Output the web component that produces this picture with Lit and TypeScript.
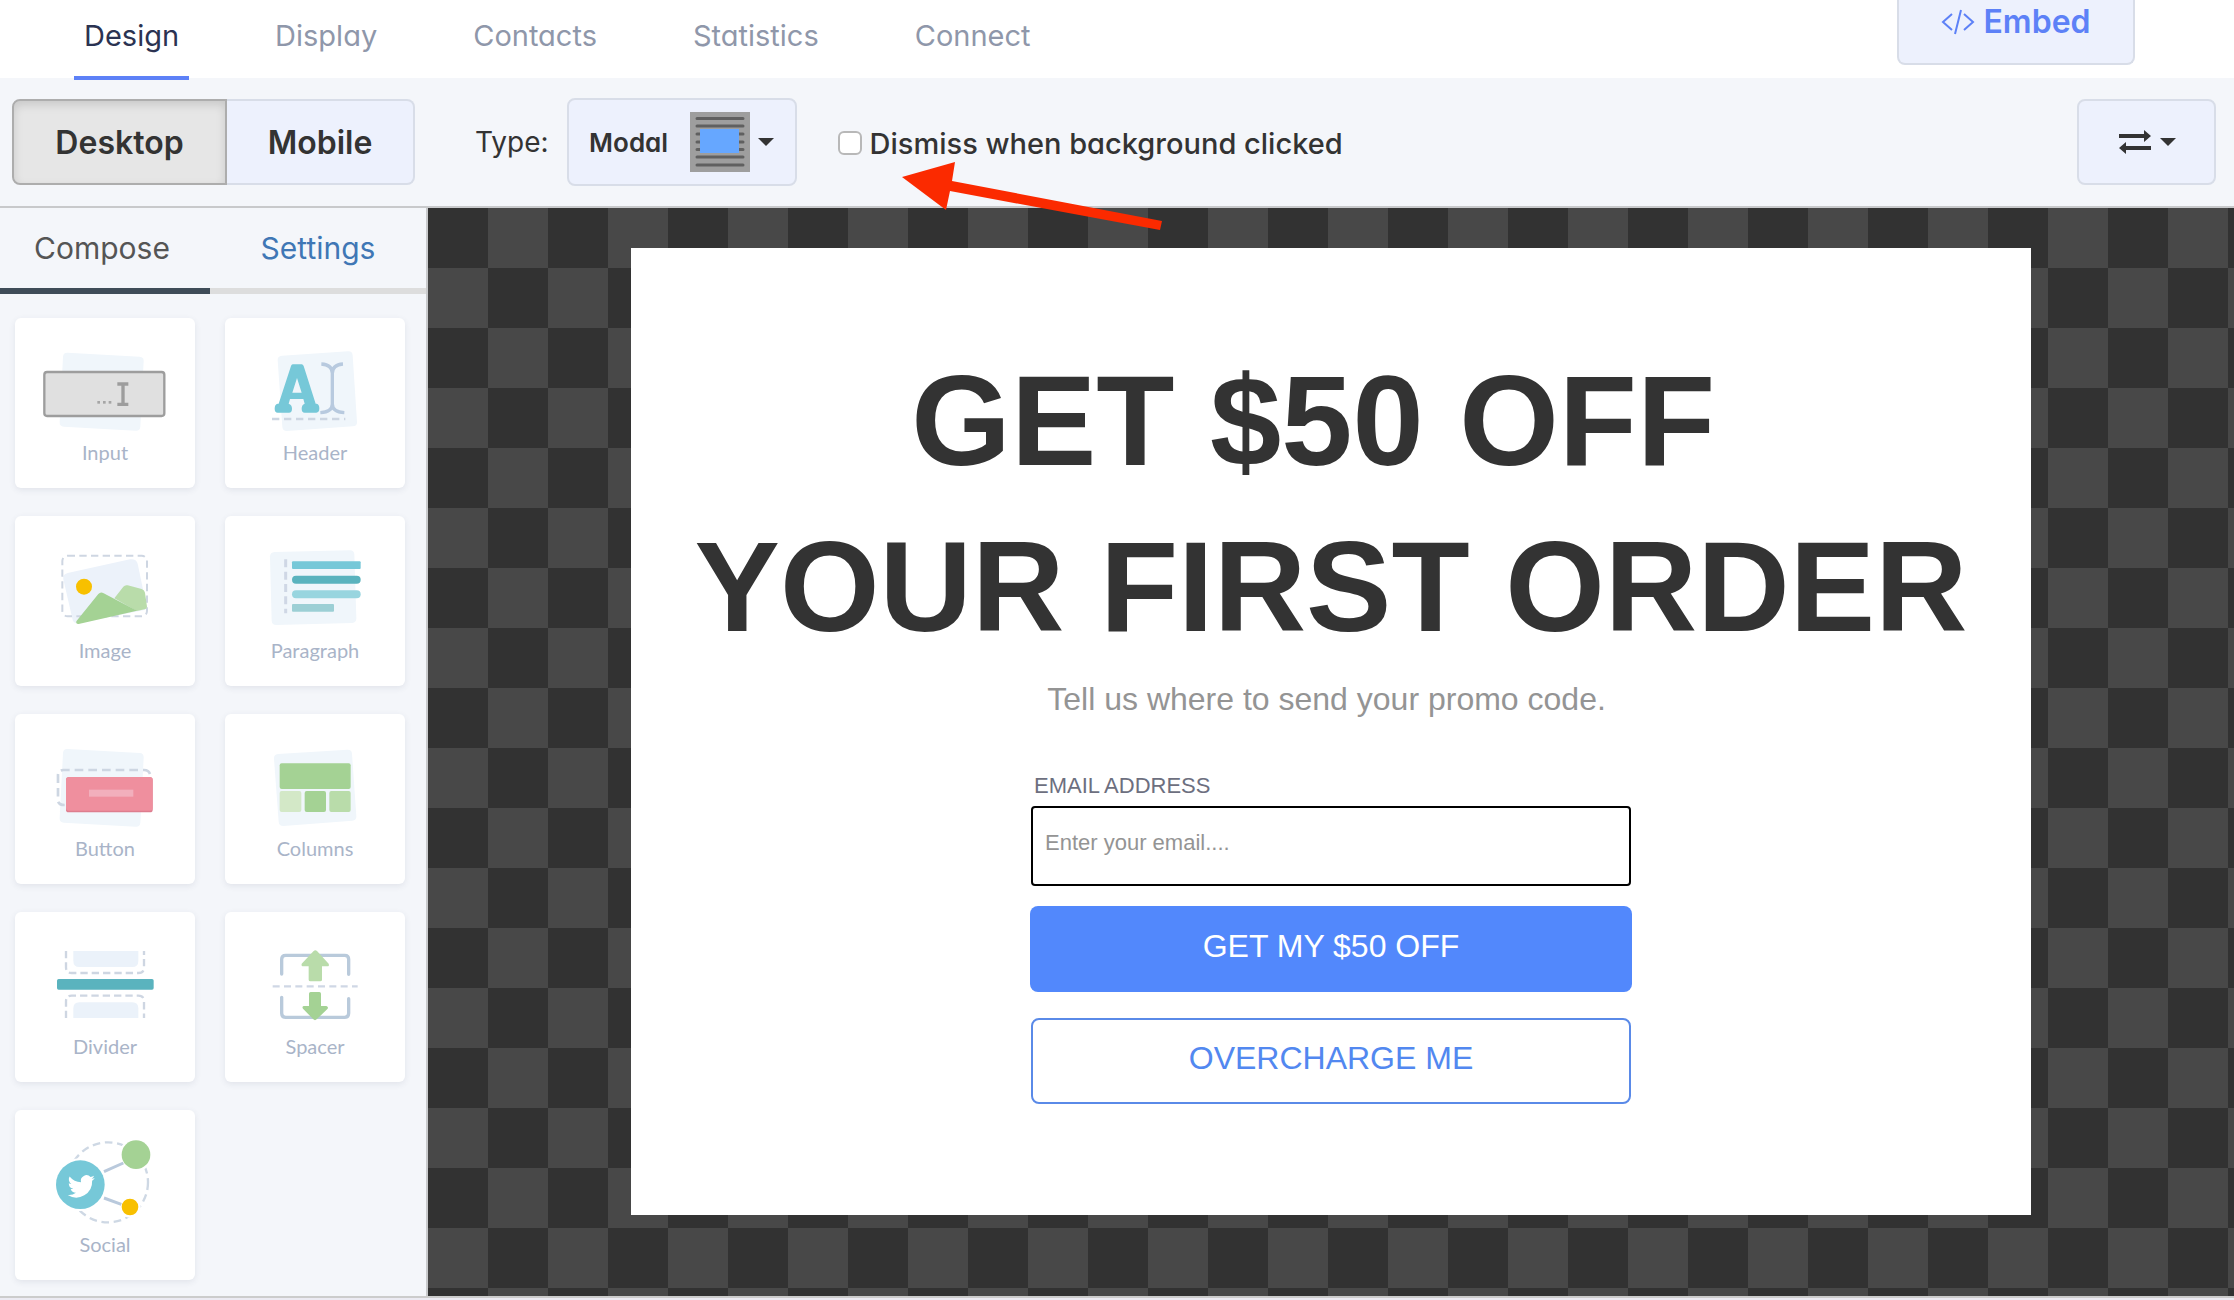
import { LitElement, html, svg, css } from "lit";
import { customElement } from "lit/decorators.js";

const tile = (name: string, view: string, art: unknown) => ({ name, view, art });

const tiles = [
  tile("Input", "45 54 540 360", svg`
    <path d="M203 158 L419 170 Q432 171 431 184 L421 380 Q420 393 407 392 L191 380 Q178 379 179 366 L189 170 Q190 157 203 158Z" fill="#f0f6fb"/>
    <rect x="133" y="216" width="360" height="132" rx="8" fill="#e0e0e0" stroke="#9d9d9d" stroke-width="7"/>
    <g fill="#a6a6a6"><rect x="292" y="303" width="8" height="8"/><rect x="309" y="303" width="8" height="8"/><rect x="326" y="303" width="8" height="8"/></g>
    <path d="M352 252H385M369 252V313M352 313H385" stroke="#9d9d9d" stroke-width="10" fill="none"/>`),
  tile("Header", "675 54 540 360", svg`
    <path d="M846 167 L1044 154 Q1057 153 1058 166 L1071 366 Q1072 378 1059 379 L861 393 Q848 393 847 380 L833 181 Q832 168 846 167Z" fill="#f0f6fb"/>
    <path fill-rule="evenodd" d="M878 193H905Q909 193 911 198L947 311H950Q958 313 958 325Q958 338 949 338H914Q905 338 905 326Q905 314 914 311L910 297H870L866 311Q876 314 876 326Q876 338 867 338H833Q824 338 824 326Q824 313 833 311H836L873 198Q875 193 878 193ZM891 234L877 278H905Z" fill="#76c8d8"/>
    <path d="M964 192Q997 194 997 220V312Q997 336 961 338M1029 192Q997 194 997 220V312Q997 336 1033 338" stroke="#b8cadf" stroke-width="10" fill="none"/>
    <path d="M816 357H1036" stroke="#cdd6e2" stroke-width="7" stroke-dasharray="22 14" fill="none"/>`),
  tile("Image", "45 648 540 360", svg`
    <path d="M203 819L390 778Q408 775 413 791L440 920Q440 928 433 930L232 970Q222 970 218 960L190 838Q187 823 203 819Z" fill="#ecf2fa"/>
    <rect x="187" y="767" width="254" height="182" rx="16" fill="none" stroke="#ced6e2" stroke-width="6" stroke-dasharray="22 13"/>
    <circle cx="252" cy="860" r="24" fill="#f8c000"/>
    <path d="M343 895L370 860Q375 854 383 856L425 867Q434 870 435 878L441 920Q441 926 434 928L410 933Z" fill="#b9dcaa"/>
    <path d="M229 964L295 882Q302 874 311 880L411 932L236 972Q227 973 229 964Z" fill="#a4d294"/>`),
  tile("Paragraph", "675 648 540 360", svg`
    <path d="M824 756L1050 751Q1062 751 1063 763L1069 955Q1069 968 1057 969L829 975Q816 975 815 962L810 770Q810 757 824 756Z" fill="#f0f6fb"/>
    <path d="M857 778V940" stroke="#cfd7e5" stroke-width="9" stroke-dasharray="24 13" fill="none"/>
    <rect x="876" y="784" width="206" height="23" rx="3" fill="#76c8d8"/>
    <rect x="876" y="827" width="206" height="24" rx="12" fill="#5ab3be"/>
    <rect x="876" y="871" width="206" height="24" rx="12" fill="#98d5df"/>
    <rect x="876" y="912" width="126" height="23" rx="3" fill="#9ccfd5"/>`),
  tile("Button", "45 72 540 360", svg`
    <path d="M203 177L419 189Q432 190 431 203L421 398Q420 411 407 410L191 398Q178 397 179 384L189 189Q190 176 203 177Z" fill="#f0f6fb"/>
    <path d="M450 252Q446 240 432 240H190Q174 240 174 256V330Q174 345 194 345" fill="none" stroke="#cdd6e2" stroke-width="8" stroke-dasharray="26 15"/>
    <rect x="198" y="262" width="260" height="105" rx="8" fill="#dd7d8e"/>
    <rect x="198" y="261" width="260" height="101" rx="8" fill="#ef8f9e"/>
    <rect x="267" y="299" width="133" height="21" fill="#f2afbc"/>`),
  tile("Columns", "675 72 540 360", svg`
    <path d="M834 192L1042 179Q1055 178 1056 191L1069 378Q1070 391 1057 392L850 408Q837 408 836 395L822 207Q821 193 834 192Z" fill="#f0f6fb"/>
    <rect x="839" y="220" width="213" height="77" rx="6" fill="#a4d294"/>
    <rect x="839" y="303" width="65" height="63" rx="6" fill="#d3e8c7"/>
    <rect x="914" y="303" width="64" height="63" rx="6" fill="#a4d294"/>
    <rect x="988" y="303" width="64" height="63" rx="6" fill="#b9dcaa"/>`),
  tile("Divider", "45 666 540 360", svg`
    <path d="M220 783H415V812Q415 831 397 831H238Q220 831 220 812Z" fill="#ebf2fa"/>
    <path d="M220 984V955Q220 937 238 937H397Q415 937 415 955V984Z" fill="#ebf2fa"/>
    <g fill="none" stroke="#ced6e2" stroke-width="7" stroke-dasharray="22 12">
      <path d="M198 783V832Q198 849 215 849H415Q432 849 432 832V783"/>
      <path d="M198 984V934Q198 917 215 917H415Q432 917 432 934V984"/></g>
    <rect x="171" y="867" width="290" height="32" rx="5" fill="#5ab3be"/>`),
  tile("Spacer", "675 666 540 360", svg`
    <g fill="none" stroke="#b9cadb" stroke-width="10" stroke-linecap="round">
      <path d="M845 852V808Q845 796 857 796H1034Q1046 796 1046 808V853"/>
      <path d="M845 922V970Q845 982 857 982H1034Q1046 982 1046 970V926"/></g>
    <path d="M818 889H1073" stroke="#cfd7e5" stroke-width="7" stroke-dasharray="21 13" fill="none"/>
    <path d="M941 783Q946 778 951 783L986 821Q989 829 982 829H966V869Q966 874 961 874H931Q926 874 926 869V829H910Q903 829 905 821Z" fill="#b9dcaa"/>
    <path d="M932 906H958Q963 906 963 911V948H979Q986 950 983 956L950 988Q945 993 940 988L909 956Q905 950 911 948H927V911Q927 906 932 906Z" fill="#a4d294"/>`),
  tile("Social", "0 0 540 360", svg`
    <circle cx="279" cy="217" r="120" fill="none" stroke="#ced8e4" stroke-width="7" stroke-dasharray="23 14"/>
    <circle cx="196" cy="224" r="79" fill="#fff"/><circle cx="363" cy="134" r="50" fill="#fff"/><circle cx="345" cy="291" r="32" fill="#fff"/>
    <path d="M267 185L325 159M267 264L319 283" stroke="#b9c9dc" stroke-width="9"/>
    <circle cx="196" cy="224" r="73" fill="#76c8d8"/>
    <circle cx="363" cy="134" r="43" fill="#a4d294"/><circle cx="345" cy="291" r="25" fill="#f8c000"/>
    <path transform="translate(159 187) scale(3.4)" d="M23.6 4.9c-.9.4-1.8.7-2.8.8a4.900 4.900 0 0 0 2.200-2.700c-1 .6-2 1-3.100 1.200a4.900 4.900 0 0 0-8.400 4.500A13.900 13.900 0 0 1 1.400 3.600a4.900 4.900 0 0 0 1.500 6.600c-.8 0-1.600-.2-2.200-.6a4.900 4.900 0 0 0 3.900 4.900c-.7.200-1.500.2-2.200.1a4.900 4.900 0 0 0 4.600 3.400A9.900 9.900 0 0 1-.2 20 14 14 0 0 0 21.300 7.500c1-.7 1.700-1.600 2.300-2.600z" fill="#fff"/>`),
];

@customElement("app-root")
export class AppRoot extends LitElement {
  static styles = css`
    :host { display: block; min-height: 100vh; background: #ecebf3; color: #333; font-family: Inter, "Liberation Sans", sans-serif; font-feature-settings: "cv11"; }
    * { box-sizing: border-box; }
    .page { display: flex; flex-direction: column; min-height: calc(100vh - 2px); border-bottom: 2px solid #ccc; }
    button, input { font: inherit; font-feature-settings: inherit; color: inherit; margin: 0; }
    .btn { display: flex; align-items: center; justify-content: center; background: #edf1fd; border: 2px solid #d8dde8; border-radius: 8px; padding: 0; }
    .top { position: relative; z-index: 1; display: flex; justify-content: space-between; align-items: flex-start; height: 78px; padding: 0 99px 0 74px; background: #fff; }
    .nav { display: flex; gap: 76px; }
    .nav a { height: 80px; padding: 16px 10px 0; font-size: 29px; line-height: 40px; color: #8f97aa; text-decoration: none; }
    .nav a.on { color: #2b3352; border-bottom: 4px solid #5d81f7; }
    .embed { width: 238px; height: 65px; padding-bottom: 20px; border-top: 0; border-radius: 0 0 8px 8px; gap: 8px; color: #5d81f7; font-size: 32px; font-weight: 600; }
    .bar { display: flex; align-items: center; height: 130px; padding: 0 18px 0 12px; background: #f4f6fa; border-bottom: 2px solid #c8c9cb; }
    .seg { display: flex; }
    .seg .btn { height: 86px; font-size: 32px; font-weight: 600; width: 188px; border-left: 0; border-radius: 0 8px 8px 0; }
    .seg .btn.on { width: 215px; background: #e6e6e6; border: 2px solid #adadad; border-radius: 8px 0 0 8px; box-shadow: inset 0 4px 10px rgba(0,0,0,.13); }
    .type { margin: 0 18px 0 60px; font-size: 28px; }
    .modal-pick { width: 230px; height: 88px; gap: 8px; font-size: 26px; font-weight: 600; }
    .modal-pick .thumb { margin-left: 14px; }
    .check { display: flex; align-items: center; gap: 8px; margin-left: 41px; padding-top: 2px; font-size: 29px; font-weight: 500; }
    .check input { appearance: none; width: 24px; height: 24px; border: 2px solid #b8b8b8; border-radius: 6px; background: #fff; }
    .swap { width: 139px; height: 86px; margin-left: auto; gap: 8px; }
    .main { flex: 1; display: grid; grid-template-columns: 428px 1fr; }
    .side { background: #f4f6fa; border-right: 2px solid #c8c9cb; }
    .tabs { display: flex; height: 86px; }
    .tabs button { flex: 1; border: 0; border-bottom: 6px solid #ddd; background: none; font-size: 30px; color: #3f77b5; padding: 0; }
    .tabs button.on { flex: 0 0 210px; padding-right: 6px; border-color: #3f4c58; color: #555; }
    .tiles { display: grid; grid-template-columns: 180px 180px; gap: 28px 30px; padding: 24px 15px 16px; }
    .tile { display: flex; flex-direction: column; align-items: center; height: 170px; padding: 0; border: 0; border-radius: 6px; background: #fff; box-shadow: 0 2px 6px rgba(60,70,100,.1); font-family: Lato, sans-serif; font-size: 20px; line-height: 28px; color: #a9b4c8; }
    .tile svg { width: 180px; height: 120px; flex: none; }
    .canvas { position: relative; display: flex; justify-content: center; align-items: flex-start; padding: 40px 60px; background: conic-gradient(#484848 25%, #323232 0 50%, #484848 0 75%, #323232 0) 0 0 / 120px 120px; }
    .popup { width: 1400px; min-height: 967px; padding: 90px 0 60px; background: #fff; font-family: "Liberation Sans", Arial, sans-serif; font-feature-settings: normal; display: flex; flex-direction: column; align-items: center; }
    h1 { margin: 0; font-size: 128px; line-height: 166px; text-align: center; white-space: nowrap; }
    .lead { margin: 7px 0 0; font-size: 32px; line-height: 44px; color: #949494; }
    .form { width: 602px; display: flex; flex-direction: column; margin-top: 49px; }
    .form label { padding-left: 4px; font-size: 22px; line-height: 32px; color: #6d6f80; }
    .form input { height: 80px; margin: 4px 1px 20px; padding: 0 12px 6px; border: 2px solid #000; border-radius: 4px; font-size: 22px; background: #fff; }
    .form input::placeholder { color: #949494; opacity: 1; }
    .cta { height: 86px; padding: 0 0 6px; border: 0; border-radius: 8px; background: #5288fc; color: #fff; font-size: 32px; }
    .no { height: 86px; margin: 26px 1px 0; padding: 0 0 6px; border: 2px solid #5a8ae8; border-radius: 8px; background: #fff; color: #5288f0; font-size: 32px; }
    .pointer { position: absolute; left: 474px; top: -46px; width: 260px; height: 70px; }
  `;

  render() {
    const caret = html`<svg width="16" height="8" viewBox="0 0 16 8"><path d="M0 0H16L8 8Z" fill="#333"/></svg>`;
    return html`
      <div class="page">
        <header class="top">
          <nav class="nav">
            <a class="on" href="#design">Design</a><a href="#display">Display</a><a href="#contacts">Contacts</a><a href="#statistics">Statistics</a><a href="#connect">Connect</a>
          </nav>
          <button class="btn embed"><svg width="34" height="26" viewBox="0 0 34 26" fill="none" stroke="#5d81f7" stroke-width="2"><path d="M11 5L2 13L11 21M23 5L32 13L23 21M20 1L14 25"/></svg>Embed</button>
        </header>
        <section class="bar">
          <div class="seg"><button class="btn on">Desktop</button><button class="btn">Mobile</button></div>
          <span class="type">Type:</span>
          <button class="btn modal-pick">Modal
            <svg class="thumb" width="60" height="60" viewBox="0 0 60 60"><rect width="60" height="60" fill="#9e9e9e"/><path d="M7 6.500H53M7 14H53M7 22H53M7 30H53M7 37.500H53M7 45H53M7 53H53" stroke="#606060" stroke-width="3" stroke-linecap="round"/><rect x="10" y="17" width="39" height="24" fill="#66a7ff"/></svg>${caret}</button>
          <label class="check"><input type="checkbox" />Dismiss when background clicked</label>
          <button class="btn swap" aria-label="Swap"><svg width="34" height="24" viewBox="0 0 34 24" fill="#333"><path d="M1 4H26V0L33 6L26 12V8H1ZM33 16H8V12L1 18L8 24V20H33Z"/></svg>${caret}</button>
        </section>
        <main class="main">
          <aside class="side">
            <div class="tabs"><button class="on">Compose</button><button>Settings</button></div>
            <div class="tiles">${tiles.map(t => html`<button class="tile"><svg viewBox=${t.view}>${t.art}</svg>${t.name}</button>`)}</div>
          </aside>
          <section class="canvas">
            <div class="popup">
              <h1>GET $50 OFF&nbsp;<br />YOUR FIRST ORDER</h1>
              <p class="lead">Tell us where to send your promo code.&nbsp;</p>
              <form class="form">
                <label for="email">EMAIL ADDRESS</label>
                <input id="email" type="email" placeholder="Enter your email...." />
                <button type="button" class="cta">GET MY $50 OFF</button>
                <button type="button" class="no">OVERCHARGE ME</button>
              </form>
            </div>
            <svg class="pointer" viewBox="0 0 260 70"><path d="M0 15L53 0L50 19L260 59L258 68L48 29L44 48Z" fill="#fb2a00"/></svg>
          </section>
        </main>
      </div>`;
  }
}
